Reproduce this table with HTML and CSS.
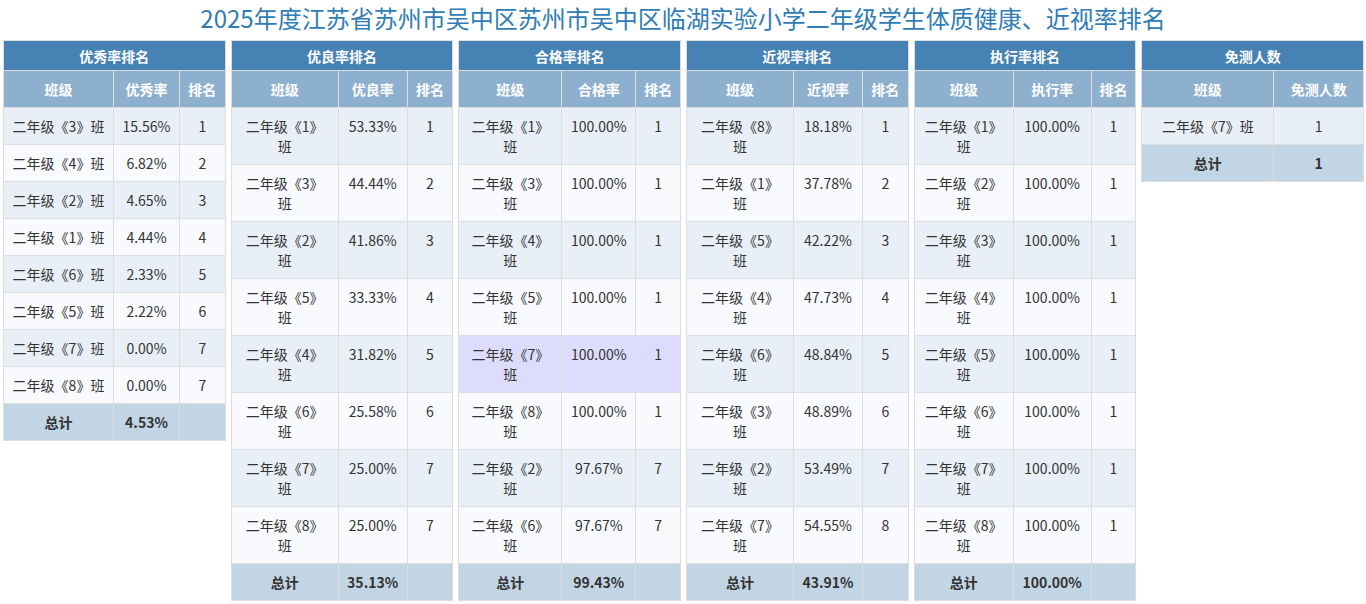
FILE: index.html
```html
<!DOCTYPE html>
<html lang="zh-CN">
<head>
<meta charset="utf-8">
<title>体质健康排名</title>
<link rel="stylesheet" href="styles.css">
</head>
<body>
<h1 class="title">2025年度江苏省苏州市吴中区苏州市吴中区临湖实验小学二年级学生体质健康、近视率排名</h1>
<div class="board">
  <div class="col">
    <table class="rank">
      <colgroup><col class="w110"><col class="w66"><col></colgroup>
      <thead>
        <tr class="cap"><th colspan="3">优秀率排名</th></tr>
        <tr class="head"><th>班级</th><th>优秀率</th><th>排名</th></tr>
      </thead>
      <tbody>
        <tr><td>二年级《3》班</td><td>15.56%</td><td>1</td></tr>
        <tr><td>二年级《4》班</td><td>6.82%</td><td>2</td></tr>
        <tr><td>二年级《2》班</td><td>4.65%</td><td>3</td></tr>
        <tr><td>二年级《1》班</td><td>4.44%</td><td>4</td></tr>
        <tr><td>二年级《6》班</td><td>2.33%</td><td>5</td></tr>
        <tr><td>二年级《5》班</td><td>2.22%</td><td>6</td></tr>
        <tr><td>二年级《7》班</td><td>0.00%</td><td>7</td></tr>
        <tr><td>二年级《8》班</td><td>0.00%</td><td>7</td></tr>
        <tr class="total"><td>总计</td><td>4.53%</td><td></td></tr>
      </tbody>
    </table>
  </div>
  <div class="col">
    <table class="rank">
      <colgroup><col class="w107"><col class="w69"><col></colgroup>
      <thead>
        <tr class="cap"><th colspan="3">优良率排名</th></tr>
        <tr class="head"><th>班级</th><th>优良率</th><th>排名</th></tr>
      </thead>
      <tbody>
        <tr><td>二年级《1》班</td><td>53.33%</td><td>1</td></tr>
        <tr><td>二年级《3》班</td><td>44.44%</td><td>2</td></tr>
        <tr><td>二年级《2》班</td><td>41.86%</td><td>3</td></tr>
        <tr><td>二年级《5》班</td><td>33.33%</td><td>4</td></tr>
        <tr><td>二年级《4》班</td><td>31.82%</td><td>5</td></tr>
        <tr><td>二年级《6》班</td><td>25.58%</td><td>6</td></tr>
        <tr><td>二年级《7》班</td><td>25.00%</td><td>7</td></tr>
        <tr><td>二年级《8》班</td><td>25.00%</td><td>7</td></tr>
        <tr class="total"><td>总计</td><td>35.13%</td><td></td></tr>
      </tbody>
    </table>
  </div>
  <div class="col">
    <table class="rank">
      <colgroup><col class="w103"><col class="w74"><col></colgroup>
      <thead>
        <tr class="cap"><th colspan="3">合格率排名</th></tr>
        <tr class="head"><th>班级</th><th>合格率</th><th>排名</th></tr>
      </thead>
      <tbody>
        <tr><td>二年级《1》班</td><td>100.00%</td><td>1</td></tr>
        <tr><td>二年级《3》班</td><td>100.00%</td><td>1</td></tr>
        <tr><td>二年级《4》班</td><td>100.00%</td><td>1</td></tr>
        <tr><td>二年级《5》班</td><td>100.00%</td><td>1</td></tr>
        <tr class="mark"><td>二年级《7》班</td><td>100.00%</td><td>1</td></tr>
        <tr><td>二年级《8》班</td><td>100.00%</td><td>1</td></tr>
        <tr><td>二年级《2》班</td><td>97.67%</td><td>7</td></tr>
        <tr><td>二年级《6》班</td><td>97.67%</td><td>7</td></tr>
        <tr class="total"><td>总计</td><td>99.43%</td><td></td></tr>
      </tbody>
    </table>
  </div>
  <div class="col">
    <table class="rank">
      <colgroup><col class="w107"><col class="w69"><col></colgroup>
      <thead>
        <tr class="cap"><th colspan="3">近视率排名</th></tr>
        <tr class="head"><th>班级</th><th>近视率</th><th>排名</th></tr>
      </thead>
      <tbody>
        <tr><td>二年级《8》班</td><td>18.18%</td><td>1</td></tr>
        <tr><td>二年级《1》班</td><td>37.78%</td><td>2</td></tr>
        <tr><td>二年级《5》班</td><td>42.22%</td><td>3</td></tr>
        <tr><td>二年级《4》班</td><td>47.73%</td><td>4</td></tr>
        <tr><td>二年级《6》班</td><td>48.84%</td><td>5</td></tr>
        <tr><td>二年级《3》班</td><td>48.89%</td><td>6</td></tr>
        <tr><td>二年级《2》班</td><td>53.49%</td><td>7</td></tr>
        <tr><td>二年级《7》班</td><td>54.55%</td><td>8</td></tr>
        <tr class="total"><td>总计</td><td>43.91%</td><td></td></tr>
      </tbody>
    </table>
  </div>
  <div class="col">
    <table class="rank">
      <colgroup><col class="w99"><col class="w78"><col></colgroup>
      <thead>
        <tr class="cap"><th colspan="3">执行率排名</th></tr>
        <tr class="head"><th>班级</th><th>执行率</th><th>排名</th></tr>
      </thead>
      <tbody>
        <tr><td>二年级《1》班</td><td>100.00%</td><td>1</td></tr>
        <tr><td>二年级《2》班</td><td>100.00%</td><td>1</td></tr>
        <tr><td>二年级《3》班</td><td>100.00%</td><td>1</td></tr>
        <tr><td>二年级《4》班</td><td>100.00%</td><td>1</td></tr>
        <tr><td>二年级《5》班</td><td>100.00%</td><td>1</td></tr>
        <tr><td>二年级《6》班</td><td>100.00%</td><td>1</td></tr>
        <tr><td>二年级《7》班</td><td>100.00%</td><td>1</td></tr>
        <tr><td>二年级《8》班</td><td>100.00%</td><td>1</td></tr>
        <tr class="total"><td>总计</td><td>100.00%</td><td></td></tr>
      </tbody>
    </table>
  </div>
  <div class="col">
    <table class="rank">
      <colgroup><col class="w132"><col></colgroup>
      <thead>
        <tr class="cap"><th colspan="2">免测人数</th></tr>
        <tr class="head"><th>班级</th><th>免测人数</th></tr>
      </thead>
      <tbody>
        <tr><td>二年级《7》班</td><td>1</td></tr>
        <tr class="total"><td>总计</td><td>1</td></tr>
      </tbody>
    </table>
  </div>
</div>
</body>
</html>
```

FILE: styles.css
```css
html, body {
  margin: 0;
  padding: 0;
  background: #ffffff;
}

body {
  font-family: "Noto Sans CJK SC", "Noto Sans", sans-serif;
  font-size: 14px;
  line-height: 20px;
  color: #333333;
}

.title {
  margin: 0 0 4px 0;
  height: 36px;
  line-height: 36px;
  font-size: 24px;
  font-weight: normal;
  text-align: center;
  color: #307db5;
}

.board {
  display: grid;
  grid-template-columns: repeat(6, 1fr);
  align-items: start;
}

.col {
  padding: 0 2px 0 3px;
  min-width: 0;
}

.rank {
  width: 100%;
  border-collapse: collapse;
  table-layout: fixed;
}

.w110 { width: 110px; }
.w107 { width: 107px; }
.w103 { width: 103px; }
.w99 { width: 99px; }
.w132 { width: 132px; }
.w66 { width: 66px; }
.w69 { width: 69px; }
.w74 { width: 74px; }
.w78 { width: 78px; }

.rank th,
.rank td {
  border: 1px solid #dddddd;
  text-align: center;
  vertical-align: top;
  padding: 8px;
}

.rank th {
  color: #ffffff;
  font-weight: bold;
  white-space: nowrap;
  overflow: visible;
}

.rank .cap th {
  background: #4682b4;
  padding: 5px 8px 4px;
}

.rank .head th {
  background: #8eb0cf;
  padding-left: 4px;
  padding-right: 4px;
}

.rank tbody tr:nth-child(odd) td {
  background: #e8eff6;
}

.rank tbody tr:nth-child(even) td {
  background: #f8fafe;
}

.rank tbody tr.mark td {
  background: #dddcfc;
}

.rank tbody tr.total td {
  background: #c2d5e4;
  font-weight: bold;
}
```
